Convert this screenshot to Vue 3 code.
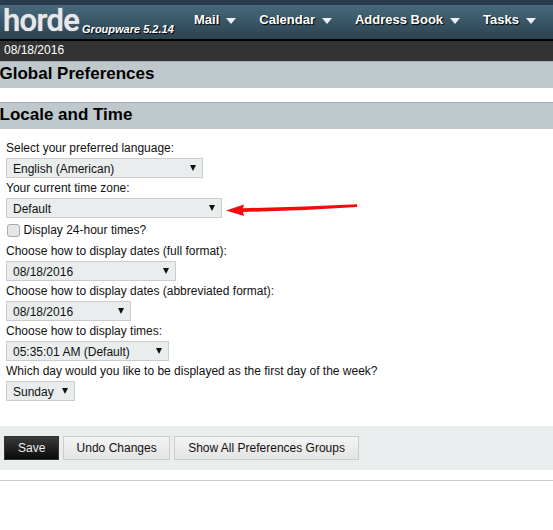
<script setup>
const menus = ['Mail', 'Calendar', 'Address Book', 'Tasks']
const fields = [
  { label: 'Select your preferred language:', value: 'English (American)', width: 197 },
  { label: 'Your current time zone:', value: 'Default', width: 216 },
  { check: 'Display 24-hour times?' },
  { label: 'Choose how to display dates (full format):', value: '08/18/2016', width: 170 },
  { label: 'Choose how to display dates (abbreviated format):', value: '08/18/2016', width: 125 },
  { label: 'Choose how to display times:', value: '05:35:01 AM (Default)', width: 163 },
  { label: 'Which day would you like to be displayed as the first day of the week?', value: 'Sunday', width: 69 },
]
</script>

<template>
  <div class="page">
    <header class="top">
      <div class="brand">
        <span class="logo">horde</span>
        <span class="version">Groupware 5.2.14</span>
      </div>
      <nav class="menu">
        <span v-for="m in menus" :key="m" class="item">{{ m }}<i class="tri"></i></span>
      </nav>
    </header>
    <div class="datebar">08/18/2016</div>
    <h1 class="title">Global Preferences</h1>
    <h2 class="title second">Locale and Time</h2>
    <form class="form">
      <template v-for="f in fields" :key="f.label || f.check">
        <label v-if="f.check" class="check"><input type="checkbox" /><span class="check-text">{{ f.check }}</span></label>
        <div v-else class="field">
          <div class="label">{{ f.label }}</div>
          <div class="sel-wrap" :style="{ width: f.width + 'px' }">
            <select class="sel"><option>{{ f.value }}</option></select>
            <i class="caret"></i>
          </div>
        </div>
      </template>
    </form>
    <div class="actions">
      <button type="button" class="btn primary">Save</button>
      <button type="button" class="btn">Undo Changes</button>
      <button type="button" class="btn">Show All Preferences Groups</button>
    </div>
    <hr class="rule" />
    <svg class="arrow" width="135" height="18" viewBox="0 0 135 18">
      <path d="M1 9.5 L19 3.5 L18 7.2 L80 5.6 L132 3.2 L132 6 L80 9 L18 11 L19 15 Z" fill="#f40b0b" />
    </svg>
  </div>
</template>

<style>
html, body { margin: 0; background: #fff; }
</style>

<style scoped>
.page {
  position: relative;
  width: 553px;
  height: 530px;
  overflow: hidden;
  font-family: "Liberation Sans", Arial, sans-serif;
  font-size: 12px;
  color: #111;
}
.top {
  box-sizing: border-box;
  height: 41px;
  padding-top: 5px;
  display: flex;
  justify-content: space-between;
  background: linear-gradient(#2b3b4e 0 5px, #466a7c 5px, #2c4250 39px, #000 39px);
}
.brand { display: flex; align-items: flex-end; height: 34px; padding-left: 3px; }
.logo {
  font-family: Roboto, sans-serif;
  font-size: 31px;
  font-weight: 500;
  line-height: 34px;
  height: 34px;
  letter-spacing: -0.7px;
  color: #e8e8e8;
  text-shadow: 0 0 1px #ccc;
  position: relative;
  top: -1px;
}
.version {
  margin-left: 3px;
  margin-bottom: 4px;
  font-size: 11px;
  font-weight: bold;
  font-style: italic;
  color: #fff;
  text-shadow: 1px 1px 1px #000;
}
.menu { display: flex; gap: 23px; padding-right: 17px; }
.item {
  display: flex;
  align-items: flex-start;
  font-size: 13px;
  font-weight: bold;
  line-height: 30px;
  height: 30px;
  color: #fff;
  text-shadow: 1px 1px 1px #000;
}
.tri {
  width: 0;
  height: 0;
  margin: 13px 0 0 7px;
  border-left: 5.5px solid transparent;
  border-right: 5.5px solid transparent;
  border-top: 6px solid #eef;
}
.datebar {
  height: 20px;
  line-height: 19px;
  padding-left: 4px;
  background: #333;
  color: #fff;
  font-size: 12px;
}
.title {
  margin: 0;
  height: 27px;
  line-height: 23px;
  font-size: 17px;
  font-weight: bold;
  text-indent: -0.5px;
  background: #bfc8cb;
  color: #000;
  border-top: 1px solid #aab;
  box-sizing: border-box;
}
.second { margin-top: 14px; }
.form {
  display: flex;
  flex-direction: column;
  padding: 12px 6px 0;
  height: 297px;
  box-sizing: border-box;
}
.field { display: flex; flex-direction: column; align-items: flex-start; }
.label { line-height: 14px; height: 14px; margin-bottom: 3px; }
.sel-wrap { position: relative; height: 20px; margin-bottom: 3px; }
.sel {
  appearance: none;
  display: block;
  box-sizing: border-box;
  width: 100%;
  height: 20px;
  margin: 0;
  padding: 2px 0 0 6px;
  font: 12px "Liberation Sans", Arial, sans-serif;
  color: #111;
  background-color: #eaeded;
  border: 1px solid #ccc;
  border-radius: 0;
}
.caret {
  position: absolute;
  right: 7px;
  top: 7px;
  width: 0;
  height: 0;
  border-left: 3.5px solid transparent;
  border-right: 3.5px solid transparent;
  border-top: 6px solid #111;
  pointer-events: none;
}
.check { display: flex; align-items: center; gap: 3.5px; height: 19px; margin-bottom: 4px; }
.check-text { margin-bottom: 2px; }
.check input {
  appearance: none;
  box-sizing: border-box;
  margin: 0 0 0 1px;
  width: 13px;
  height: 13px;
  background: #e6e6e6;
  border: 1px solid #aaa;
  border-radius: 3px;
}
.actions {
  display: flex;
  gap: 3.5px;
  height: 44px;
  padding: 10px 0 0 4px;
  box-sizing: border-box;
  background: #eaeded;
}
.btn {
  height: 24px;
  padding: 0 12.75px;
  font: 12px "Liberation Sans", Arial, sans-serif;
  color: #111;
  background: linear-gradient(#f4f4f4, #e4e4e4);
  border: 1px solid #ccc;
  border-radius: 0;
}
.btn:last-child { padding: 0 13.25px; }
.primary {
  padding: 0 13px;
  color: #eee;
  background: linear-gradient(#3a3a3a, #0a0a0a);
  border-color: #333;
}
.rule {
  margin: 10px 0 0;
  border: 0;
  border-top: 1px solid #ccc;
}
.arrow { position: absolute; left: 225px; top: 201px; }
</style>
